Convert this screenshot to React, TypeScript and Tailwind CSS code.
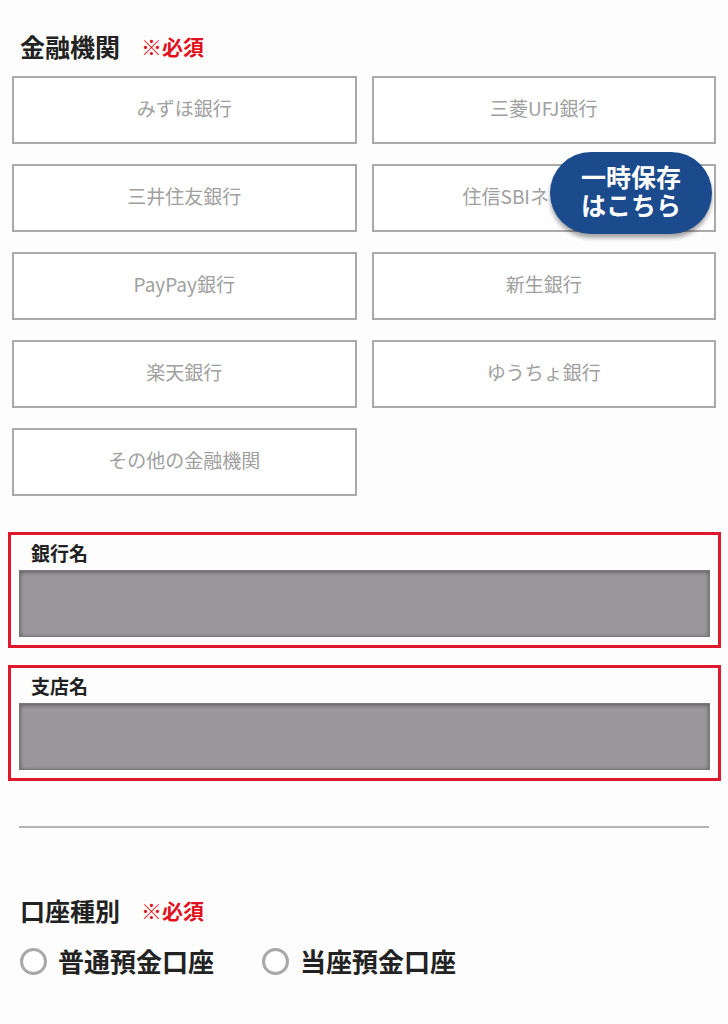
const banks = [
  'みずほ銀行',
  '三菱UFJ銀行',
  '三井住友銀行',
  '住信SBIネット銀行',
  'PayPay銀行',
  '新生銀行',
  '楽天銀行',
  'ゆうちょ銀行',
  'その他の金融機関',
];

const font = { fontFamily: '"Noto Sans CJK JP", "Noto Sans", sans-serif' };

const Required = () => (
  <span className="ml-[21px] text-[21px] font-bold text-[#e0101c]">※必須</span>
);

const Field = ({ label }: { label: string }) => (
  <div className="border-[3px] border-[#e0182b] px-[8px] pt-[5px] pb-[8px]">
    <div className="pl-[12px] text-[19px] font-bold leading-[26px] text-[#222] mb-[4px]">{label}</div>
    <div className="h-[67px] bg-[#9a989b] border border-[#7a787b] shadow-[inset_0_1px_4px_rgba(0,0,0,0.45)]" />
  </div>
);

const Radio = ({ label }: { label: string }) => (
  <label className="flex items-center gap-[11px]">
    <span className="block w-[27px] h-[27px] rounded-full border-[3px] border-[#a8a8a8] bg-white" />
    <span className="text-[26px] font-bold leading-[36px] text-[#222]">{label}</span>
  </label>
);

export default function App() {
  return (
    <div className="relative w-[728px] h-[1024px] bg-[#fdfdfd] overflow-hidden" style={font}>
      <div className="px-[8px] pt-[29px]">
        {/* 金融機関 */}
        <div className="px-[12px] flex items-center h-[36px]">
          <span className="text-[25px] font-bold text-[#222]">金融機関</span>
          <Required />
        </div>

        <div className="mt-[11px] px-[4px] grid grid-cols-2 gap-x-[15px] gap-y-[20px]">
          {banks.map(b => (
            <button
              key={b}
              className="h-[68px] pb-[3px] bg-white border-2 border-[#aaaaaa] text-[19px] text-[#a0a0a0] flex items-center justify-center"
            >
              {b}
            </button>
          ))}
        </div>

        {/* 銀行名 / 支店名 */}
        <div className="mt-[36px] mr-[-1px] flex flex-col gap-[17px]">
          <Field label="銀行名" />
          <Field label="支店名" />
        </div>

        <div className="mt-[45px] mx-[11px] h-[2px] bg-[#b4b4b4]" />

        {/* 口座種別 */}
        <div className="mt-[65px] px-[12px] flex items-center h-[36px]">
          <span className="text-[25px] font-bold text-[#222]">口座種別</span>
          <Required />
        </div>
        <div className="mt-[14px] px-[12px] flex items-center gap-[48px]">
          <Radio label="普通預金口座" />
          <Radio label="当座預金口座" />
        </div>
      </div>

      {/* 一時保存ボタン */}
      <button className="absolute left-[550px] top-[152px] w-[162px] h-[82px] pb-[6px] rounded-[42px] bg-[#1b4a8d] shadow-[0_4px_4px_rgba(0,0,0,0.35)] flex flex-col items-center justify-center text-white text-[25px] font-bold leading-[28px]">
        <span>一時保存</span>
        <span>はこちら</span>
      </button>
    </div>
  );
}
